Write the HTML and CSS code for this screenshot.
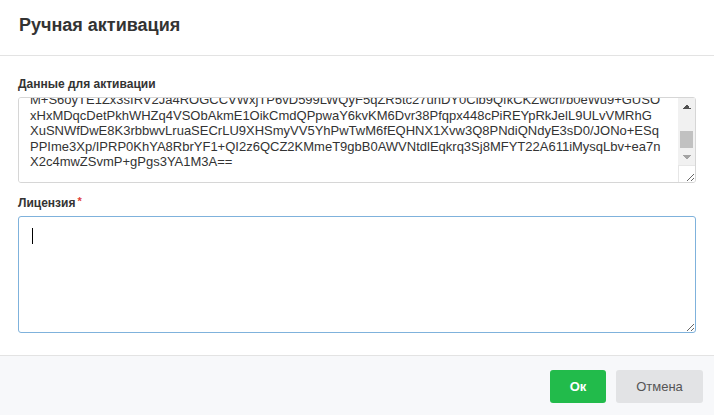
FILE: index.html
```html
<!DOCTYPE html>
<html lang="ru">
<head>
<meta charset="utf-8">
<title>Ручная активация</title>
<link rel="stylesheet" href="styles.css">
</head>
<body>
<div class="dialog">
  <header class="dialog-header">
    <h1 class="dialog-title">Ручная активация</h1>
  </header>
  <main class="dialog-body">
    <div class="field">
      <label class="field-label" for="data">Данные для активации</label>
      <div class="input-wrap">
        <textarea id="data" class="input input-data scroll-bottom" readonly>FmT1c9Qd0v8n3KXa7Lw2JpR4bH6eYzUq5sVx0CgN1oPiE3tWm9lZkA8rBfD2yGhJ4uQ7nS6cXv
aKd3Lp9Qw2Er5Ty8Ui1Op4As7Df0Gh3Jk6Lz9Xc2Vb5Nm8Qa1Ws4Ed7Rf0Tg3Yh6Uj9Ik2Ol5P
Zx8Cv1Bn4Mq7We0Rt3Yu6Io9Pa2Sd5Fg8Hj1Kl4Zx7Cv0Bn3Mq6We9Rt2Yu5Io8Pa1Sd4Fg7H
Hj0Kl3Zx6Cv9Bn2Mq5We8Rt1Yu4Io7Pa0Sd3Fg6Hj9Kl2Zx5Cv8Bn1Mq4We7Rt0Yu3Io6Pa9
M+S6oyTE1Zx3sIRV2Ja4ROGCCVWxjTP6vD599LWQyF5qZR5tc27unDY0Clb9QfkCKZwch/b0eWu9+GUSO
xHxMDqcDetPkhWHZq4VSObAkmE1OikCmdQPpwaY6kvKM6Dvr38Pfqpx448cPiREYpRkJelL9ULvVMRhG
XuSNWfDwE8K3rbbwvLruaSECrLU9XHSmyVV5YhPwTwM6fEQHNX1Xvw3Q8PNdiQNdyE3sD0/JONo+ESq
PPIme3Xp/IPRP0KhYA8RbrYF1+QI2z6QCZ2KMmeT9gbB0AWVNtdlEqkrq3Sj8MFYT22A611iMysqLbv+ea7n
X2c4mwZSvmP+gPgs3YA1M3A==</textarea>
        <div class="scrollbar" aria-hidden="true">
          <span class="sb-btn sb-up"></span>
          <span class="sb-track"><span class="sb-thumb"></span></span>
          <span class="sb-btn sb-down"></span>
        </div>
        <span class="sb-corner" aria-hidden="true"></span>
      </div>
    </div>
    <div class="field">
      <label class="field-label" for="license">Лицензия<span class="required">*</span></label>
      <div class="input-wrap">
        <textarea id="license" class="input input-license"></textarea>
        <span class="caret"></span>
      </div>
    </div>
  </main>
  <footer class="dialog-footer">
    <button class="btn btn-ok" type="button">Ок</button>
    <button class="btn btn-cancel" type="button">Отмена</button>
  </footer>
</div>
<script src="script.js"></script>
</body>
</html>
```

FILE: styles.css
```css
* { box-sizing: border-box; }

html, body {
  margin: 0;
  padding: 0;
  background: #ffffff;
}

body {
  font-family: "Liberation Sans", Arial, sans-serif;
  color: #333333;
  width: 714px;
  height: 415px;
  overflow: hidden;
}

.dialog {
  display: flex;
  flex-direction: column;
  height: 415px;
}

.dialog-header {
  height: 56px;
  padding: 14px 19px 0;
  border-bottom: 1px solid #e3e3e3;
}

.dialog-title {
  margin: 0;
  font-size: 18px;
  line-height: 22px;
  font-weight: bold;
  color: #333333;
}

.dialog-body {
  flex: 1;
  padding: 21px 18px 0 18px;
  display: flex;
  flex-direction: column;
  gap: 13px;
}

.field {
  display: flex;
  flex-direction: column;
}

.field-label {
  font-size: 12px;
  line-height: 14px;
  font-weight: bold;
  color: #333333;
  margin-bottom: 6px;
}

.required {
  color: #e0403a;
  margin-left: 2px;
  font-size: 11px;
  vertical-align: top;
  position: relative;
  top: -2px;
}

.input-wrap {
  position: relative;
  width: 678px;
}

.input {
  display: block;
  width: 678px;
  font-family: "Liberation Sans", Arial, sans-serif;
  font-size: 13px;
  line-height: 15.5px;
  color: #333333;
  border-radius: 3px;
  outline: none;
  margin: 0;
}

.input-data {
  height: 86px;
  border: 1px solid #d6d6d6;
  padding: 5px 28px 12px 11px;
  resize: vertical;
  background: #fff;
}

/* drawn scrollbar overlay for the data box */
.scrollbar {
  position: absolute;
  top: 1px;
  right: 1px;
  width: 17px;
  height: 67px;
  background: #f1f1f1;
  display: flex;
  flex-direction: column;
}

.sb-btn {
  display: block;
  height: 17px;
  flex: none;
}

.sb-up {
  background: conic-gradient(from 135deg at 50% 0, #505050 90deg, transparent 0) center / 8px 4px no-repeat;
}

.sb-down {
  background: conic-gradient(from -45deg at 50% 100%, #a3a3a3 90deg, transparent 0) center / 8px 4px no-repeat;
}

.sb-track {
  flex: 1;
  display: flex;
  flex-direction: column;
  justify-content: flex-end;
  padding: 0 2px;
}

.sb-thumb {
  display: block;
  height: 17px;
  background: #c1c1c1;
}

.sb-corner {
  position: absolute;
  right: 1px;
  bottom: 1px;
  width: 17px;
  height: 17px;
  border-left: 1px solid #e6e6e6;
  border-top: 1px solid #e6e6e6;
  pointer-events: none;
}

.input-license {
  height: 117px;
  border: 1px solid #7fb2dc;
  padding: 8px 12px;
  resize: vertical;
  caret-color: transparent;
}

.caret {
  position: absolute;
  left: 14px;
  top: 12px;
  width: 1px;
  height: 16px;
  background: #000;
}

.dialog-footer {
  height: 60px;
  border-top: 1px solid #e3e3e3;
  background: #f7f8fa;
  display: flex;
  justify-content: flex-end;
  align-items: flex-start;
  gap: 10px;
  padding: 14px 11px 0 0;
}

.btn {
  height: 33px;
  border: none;
  border-radius: 3px;
  font-family: "Liberation Sans", Arial, sans-serif;
  font-size: 13px;
  cursor: pointer;
}

.btn-ok {
  width: 56px;
  background: #22bb4b;
  color: #ffffff;
  font-weight: bold;
}

.btn-cancel {
  width: 87px;
  background: #e2e3e5;
  color: #555555;
}
```

FILE: script.js
```js
document.querySelectorAll('.scroll-bottom').forEach(function (t) {
  t.scrollTop = t.scrollHeight;
});
```
